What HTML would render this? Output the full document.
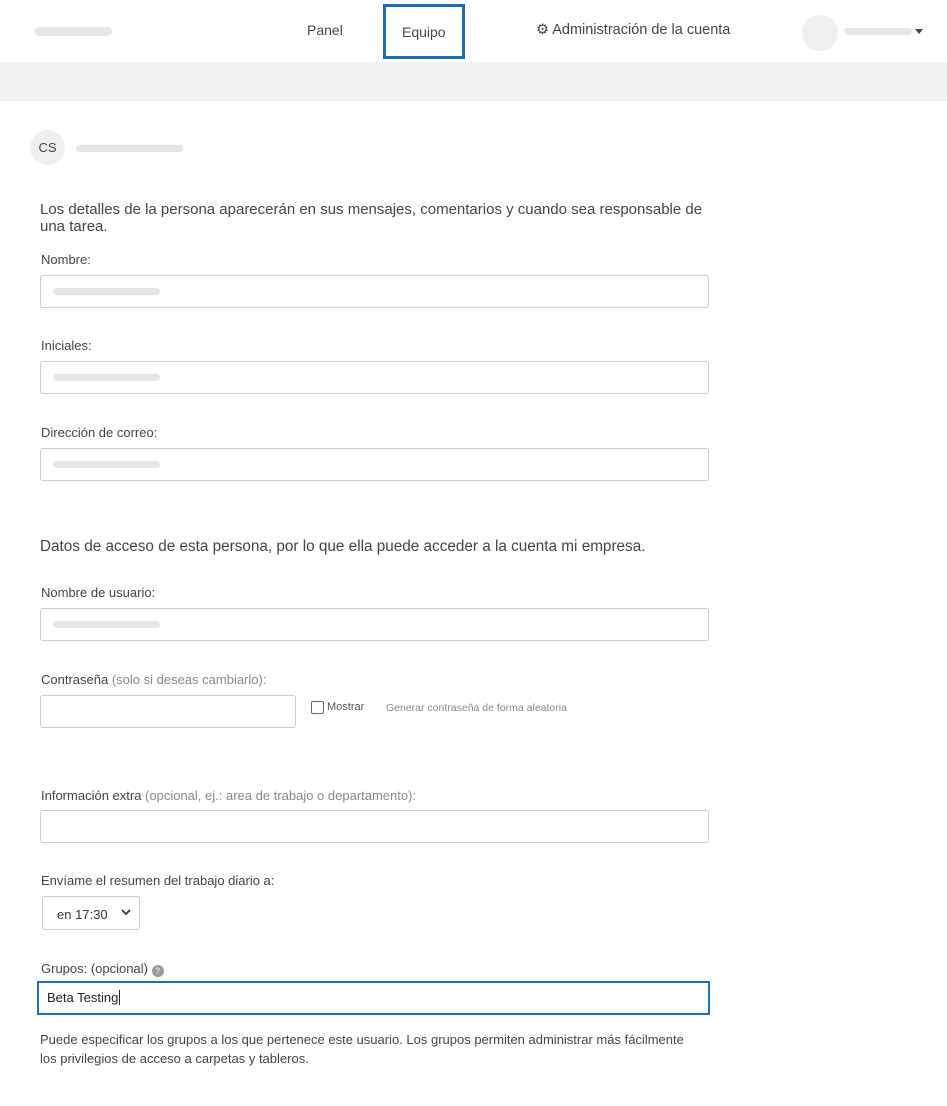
<!DOCTYPE html>
<html><head><meta charset="utf-8"><style>
*{box-sizing:border-box;margin:0;padding:0}
body{width:947px;height:1106px;background:#fff;font-family:"Liberation Sans",sans-serif;color:#444;position:relative;overflow:hidden}
.a{position:absolute}
.bar{position:absolute;height:7px;border-radius:4px;background:#e6e6e6}
.lbl{position:absolute;left:41px;font-size:13px;color:#444}
.lbl span{color:#888}
.inp{position:absolute;left:40px;width:669px;height:33px;border:1px solid #ccc;border-radius:3px;background:#fff}
.inp .bar{left:12px;top:12px;width:107px}
.h{position:absolute;left:40px;font-size:15px;color:#444;line-height:17px}
</style></head><body>
<div class="bar" style="left:35px;top:27px;width:77px;height:9px"></div>
<div class="a" style="left:307px;top:22px;font-size:14px;color:#444">Panel</div>
<div class="a" style="left:383px;top:4px;width:82px;height:55px;border:3px solid #1f6fb5"></div>
<div class="a" style="left:402px;top:24px;font-size:14px;color:#444">Equipo</div>
<div class="a" style="left:536px;top:22px;font-size:14.5px;color:#444">⚙ Administración de la cuenta</div>
<div class="a" style="left:802px;top:15px;width:36px;height:36px;border-radius:50%;background:#efefef"></div>
<div class="bar" style="left:844px;top:28px;width:68px"></div>
<div class="a" style="left:915px;top:29px;border:4px solid transparent;border-top:5px solid #444;border-bottom:0"></div>
<div class="a" style="left:0;top:62px;width:947px;height:39px;background:#f2f2f2"></div>
<div class="a" style="left:30px;top:130px;width:35px;height:35px;border-radius:50%;background:#efefef;font-size:13px;text-align:center;line-height:35px;color:#444">CS</div>
<div class="bar" style="left:76px;top:145px;width:107px"></div>
<div class="h" style="top:201px;width:670px">Los detalles de la persona aparecerán en sus mensajes, comentarios y cuando sea responsable de una tarea.</div>
<div class="lbl" style="top:252px">Nombre:</div>
<div class="inp" style="top:275px"><div class="bar"></div></div>
<div class="lbl" style="top:338px">Iniciales:</div>
<div class="inp" style="top:361px"><div class="bar"></div></div>
<div class="lbl" style="top:425px">Dirección de correo:</div>
<div class="inp" style="top:448px"><div class="bar"></div></div>
<div class="h" style="top:538px;font-size:15.3px">Datos de acceso de esta persona, por lo que ella puede acceder a la cuenta mi empresa.</div>
<div class="lbl" style="top:585px">Nombre de usuario:</div>
<div class="inp" style="top:608px"><div class="bar"></div></div>
<div class="lbl" style="top:672px">Contraseña <span>(solo si deseas cambiarlo):</span></div>
<div class="inp" style="top:695px;width:256px"></div>
<div class="a" style="left:311px;top:701px;width:13px;height:13px;border:1px solid #666;border-radius:2px"></div>
<div class="a" style="left:327px;top:701px;font-size:11px;color:#555">Mostrar</div>
<div class="a" style="left:386px;top:702px;font-size:10.5px;color:#888">Generar contraseña de forma aleatoria</div>
<div class="lbl" style="top:788px">Información extra <span>(opcional, ej.: area de trabajo o departamento):</span></div>
<div class="inp" style="top:810px"></div>
<div class="lbl" style="top:873px">Envíame el resumen del trabajo diario a:</div>
<div class="a" style="left:42px;top:896px;width:98px;height:34px;border:1px solid #ccc;border-radius:3px;font-size:13px;padding:10px 0 0 14px;color:#333">en 17:30</div>
<svg class="a" style="left:121px;top:908px" width="10" height="8" viewBox="0 0 10 8"><path d="M1 2l4 4 4-4" stroke="#333" stroke-width="1.8" fill="none"/></svg>
<div class="lbl" style="top:961px">Grupos: (opcional) <span style="display:inline-block;width:12px;height:12px;border-radius:50%;background:#999;color:#fff;font-size:9px;text-align:center;line-height:12px;vertical-align:-1px">?</span></div>
<div class="a" style="left:37px;top:981px;width:673px;height:34px;border:2px solid #1f6fb5;font-size:13px;padding:7px 0 0 8px;color:#222">Beta Testing<span style="border-left:1px solid #222;margin-left:1px"></span></div>
<div class="a" style="left:40px;top:1030px;width:660px;font-size:13px;line-height:19px;color:#444">Puede especificar los grupos a los que pertenece este usuario. Los grupos permiten administrar más fácilmente los privilegios de acceso a carpetas y tableros.</div>
</body></html>
